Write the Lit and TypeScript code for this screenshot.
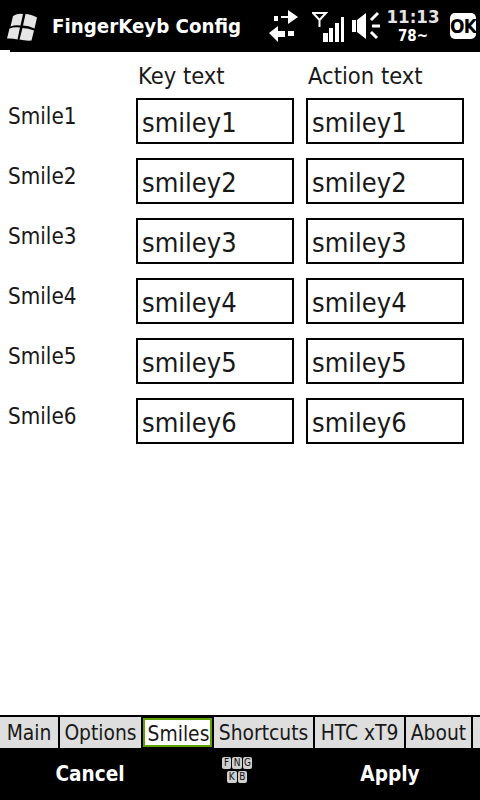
import { LitElement, html, css } from "lit";
import { customElement } from "lit/decorators.js";

@customElement("app-root")
export class AppRoot extends LitElement {
  static styles = css`
    :host { display: flex; flex-direction: column; width: 480px; height: 800px; background: #fff; color: #181818; font-family: "DejaVu Sans Condensed", "DejaVu Sans", sans-serif; overflow: hidden; }
    .status { position: relative; height: 52px; background: #000; color: #fff; display: flex; align-items: center; flex: none; }
    .status::after { content: ""; position: absolute; left: 0; bottom: 0; width: 10px; height: 2px; background: #fff; }
    .logo { margin-left: 5px; width: 34px; height: 52px; flex: none; }
    .title { margin-left: 13px; font-size: 20.3px; font-weight: 700; width: 217px; white-space: nowrap; }
    .icons { display: flex; align-items: center; }
    .ic { height: 52px; flex: none; display: block; }
    .ic.arrows { width: 30px; }
    .ic.signal { width: 33px; margin-left: 13px; }
    .ic.speaker { width: 29px; margin-left: 7px; }
    .clock { display: flex; flex-direction: column; align-items: center; font-weight: 700; width: 58px; margin: -2px 0 0 3px; }
    .clock .t { font-size: 18.5px; line-height: 21px; color: #e4e4e4; }
    .clock .b { font-size: 15px; line-height: 18px; }
    .ok { margin-left: 8px; width: 26px; height: 26px; background: #fff; color: #000; border-radius: 5px; font-weight: 700; font-size: 19px; display: flex; align-items: center; justify-content: center; letter-spacing: -1px; }
    .body { flex: 1; display: grid; grid-template-columns: 136px 170px 158px; grid-template-rows: 36px; grid-auto-rows: 60px; padding-top: 10px; align-content: start; }
    .head { font-size: 23.5px; padding-left: 2px; line-height: 28px; }
    .label { font-size: 22.3px; padding-left: 8px; line-height: 26px; padding-top: 5px; }
    .box { box-sizing: border-box; width: 158px; height: 46px; border: 2px solid #000; font-size: 27px; padding: 1px 0 0 4px; line-height: 44px; }
    .tabs { flex: none; height: 31px; border-top: 2px solid #000; display: flex; background: #000; }
    .tab { font-size: 20.8px; text-align: center; line-height: 33px; height: 31px; background: #dedede; border-right: 2px solid #000; box-sizing: border-box; white-space: nowrap; }
    .tab.on { background: #fff; border: 2px solid #5fa100; line-height: 28px; margin: 1px 2px 1px 0; height: 29px; padding-left: 2px; }
    .tab.rest { flex: 1; border-right: 0; }
    .foot { height: 52px; flex: none; background: #000; color: #fff; display: grid; grid-template-columns: 180px 120px 180px; align-items: center; text-align: center; font-weight: 700; font-size: 20.6px; }
    .keys { display: flex; flex-direction: column; align-items: center; gap: 2px; padding: 0 6px 9px 0; }
    .keyrow { display: flex; gap: 1px; }
    .key { width: 9.5px; height: 12px; background: #cfcfcf; color: #111; border-radius: 2px; font-size: 10px; font-weight: 400; line-height: 12px; text-align: center; }
  `;

  render() {
    const rows = [1, 2, 3, 4, 5, 6];
    const tabs: [string, number, boolean][] = [["Main", 60, false], ["Options", 83, false], ["Smiles", 69, true], ["Shortcuts", 101, false], ["HTC xT9", 91, false], ["About", 67, false]];
    return html`
      <div class="status">
        <svg class="logo" viewBox="5 0 34 52"><path fill="#e6e6e6" d="M13 16q5-3 10-2l-2.500 11.500q-5-1-10 1z M25.500 14q5.500 0 11.500 3.500l-2.500 11q-6-3-11.500-3z M9.500 28.500q5-2 10.500-1l-2.500 12q-5.500-1.500-10.500-1z M22.500 28q6 0 11.500 2.500l-2.500 10q-6 .5-12-1z"/></svg>
        <div class="title">FingerKeyb Config</div>
        <div class="icons">
          <svg class="ic arrows" viewBox="269 0 30 52"><path fill="#fff" d="M274 16h4v5h-4z M281 16h7v-6l10 7-10 7v-6h-7z M269 33l9-7v5h7v6h-7v5z M288 31h6v5h-6z"/></svg>
          <svg class="ic signal" viewBox="312 0 33 52"><path fill="none" stroke="#fff" stroke-width="2" d="M313 13h13l-6.500 7z M319.500 19v8"/><path fill="#fff" d="M323 33h5v9h-5z M329 28h4v14h-4z M335 23h4v19h-4z M341 17h3v25h-3z"/></svg>
          <svg class="ic speaker" viewBox="352 0 29 52"><path fill="#fff" d="M352 20h4v12h-4z M357 20l9-7v26l-9-7z"/><path stroke="#fff" stroke-width="3" d="M371 20l7-7 M372 26h8 M371 32l6 6"/></svg>
        </div>
        <div class="clock"><span class="t">11:13</span><span class="b">78~</span></div>
        <div class="ok">OK</div>
      </div>
      <div class="body">
        <div class="head"></div><div class="head">Key text</div><div class="head">Action text</div>
        ${rows.map((n) => html`
          <div class="label">Smile${n}</div>
          <div class="box">smiley${n}</div>
          <div class="box">smiley${n}</div>
        `)}
      </div>
      <div class="tabs">
        ${tabs.map(([t, w, on]) => html`<div class="tab ${on ? "on" : ""}" style="width:${w}px">${t}</div>`)}
        <div class="tab rest"></div>
      </div>
      <div class="foot">
        <div>Cancel</div>
        <div class="keys">
          <div class="keyrow"><span class="key">F</span><span class="key">N</span><span class="key">G</span></div>
          <div class="keyrow"><span class="key">K</span><span class="key">B</span></div>
        </div>
        <div>Apply</div>
      </div>
    `;
  }
}
